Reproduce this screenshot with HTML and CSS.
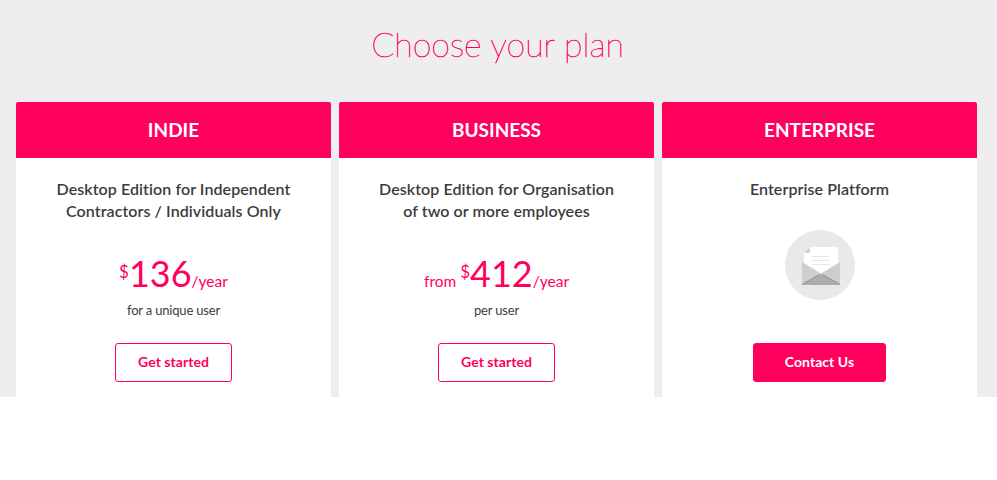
FILE: index.html
```html
<!DOCTYPE html>
<html lang="en">
<head>
<meta charset="utf-8">
<title>Choose your plan</title>
<link rel="stylesheet" href="styles.css">
</head>
<body>
<section class="pricing">
  <h1 class="title">Choose your plan</h1>
  <div class="plans">
    <article class="plan">
      <h2 class="plan-name">INDIE</h2>
      <p class="desc">Desktop Edition for Independent<br>Contractors / Individuals Only</p>
      <p class="price"><span class="currency">$</span><span class="amount">136</span>/year</p>
      <p class="unit">for a unique user</p>
      <a class="btn">Get started</a>
    </article>
    <article class="plan">
      <h2 class="plan-name">BUSINESS</h2>
      <p class="desc">Desktop Edition for Organisation<br>of two or more employees</p>
      <p class="price">from <span class="currency">$</span><span class="amount">412</span>/year</p>
      <p class="unit">per user</p>
      <a class="btn">Get started</a>
    </article>
    <article class="plan">
      <h2 class="plan-name">ENTERPRISE</h2>
      <p class="desc">Enterprise Platform</p>
      <svg class="mail" width="70" height="70" viewBox="0 0 70 70">
        <circle cx="35" cy="35" r="35" fill="#e9e9e8"/>
        <path d="M25 17H53V46H19V23Z" fill="#fff"/>
        <path d="M25 17V23H19Z" fill="#d2d1d2"/>
        <path d="M27 26.500H45M27 30.500H45M27 34.500H45" stroke="#e6e6e6"/>
        <path d="M17 32L36 43.500L55 32V55H17Z" fill="#cfcdce"/>
        <path d="M17 55V54L36 43.500L55 54V55Z" fill="#adadad"/>
        <path d="M17.500 54L34 44.800M54.500 54L38 44.800" stroke="#8c8c8c" stroke-width=".8"/>
      </svg>
      <a class="btn btn-solid">Contact Us</a>
    </article>
  </div>
</section>
</body>
</html>
```
FILE: styles.css
```css
* { box-sizing: border-box; }
body { margin: 0; background: #fff; font-family: Lato, sans-serif; font-variant-ligatures: none; color: #3c3c3c; }
h1, h2, p { margin: 0; }
.pricing { height: 397px; padding: 20px 20px 0 16px; background: #eee; }
.title { height: 82px; padding-left: 2px; font-size: 34px; line-height: 48px; font-weight: 200; letter-spacing: -.08px; -webkit-text-stroke: .5px #ff005c; text-align: center; color: #ff005c; }
.plans { display: grid; grid-template-columns: repeat(3, 315px); gap: 8px; }
.plan { height: 295px; display: flex; flex-direction: column; align-items: center; background: #fff; border-radius: 2px 2px 0 0; overflow: hidden; text-align: center; }
.plan-name { width: 100%; height: 56px; background: #ff005c; color: #fff; font-size: 19px; line-height: 56px; font-weight: 700; }
.desc { height: 72px; padding-top: 20px; font-size: 16px; line-height: 22px; font-weight: 600; letter-spacing: .08px; }
.price { height: 72px; padding-top: 19px; line-height: 48px; font-size: 15.5px; color: #ff005c; white-space: nowrap; }
.currency { font-size: 17px; position: relative; top: -9px; }
.amount { font-size: 36px; }
.unit { height: 41px; line-height: 16px; font-size: 13px; letter-spacing: -.18px; }
.btn { width: 117px; height: 39px; border: 1px solid #ff005c; border-radius: 3px; font-size: 14px; line-height: 36px; font-weight: 700; letter-spacing: .04px; color: #ff005c; }
.mail { margin-bottom: 43px; }
.btn-solid { width: 133px; background: #ff005c; color: #fff; }
```
